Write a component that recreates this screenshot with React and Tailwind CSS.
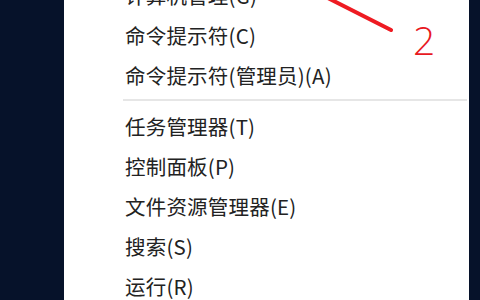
const items = [
  { label: "计算机管理(G)" },
  { label: "命令提示符(C)" },
  { label: "命令提示符(管理员)(A)" },
  { sep: true },
  { label: "任务管理器(T)" },
  { label: "控制面板(P)" },
  { label: "文件资源管理器(E)" },
  { label: "搜索(S)" },
  { label: "运行(R)" },
];

const App = () => {
  return (
    <div className="relative flex w-[480px] h-[300px] overflow-hidden bg-[#06122a]">
      <div className="w-[64px] shrink-0 bg-[#06122a]" />
      <div className="w-[405px] shrink-0 bg-white">
        <ul
          className="-mt-[25px] pl-[59px] pr-[2px] text-[20.5px] tracking-[0.2px] text-[#222222]"
          style={{ fontFamily: '"Noto Sans CJK SC", "Noto Sans", sans-serif' }}
        >
          {items.map((item, i) =>
            item.sep ? (
              <li key={i} className="h-[11px] flex flex-col pt-[4px]">
                <div className="h-[2px] bg-[#e6e6e6]" />
              </li>
            ) : (
              <li key={i} className="h-[40px] flex items-center px-[2px] leading-none">
                {item.label}
              </li>
            )
          )}
        </ul>
      </div>
      <div className="flex-1 bg-[#06122a]" />

      <svg className="absolute left-0 top-0" width="480" height="300" viewBox="0 0 480 300">
        <line x1="318" y1="-7" x2="391" y2="30" stroke="#ee1b22" strokeWidth="4" strokeLinecap="round" />
      </svg>
      <span
        className="absolute left-[413px] top-[20px] text-[39px] leading-none font-light text-[#e8191f]"
        style={{ fontFamily: '"Open Sans", sans-serif' }}
      >
        2
      </span>
    </div>
  );
};

export default App;
